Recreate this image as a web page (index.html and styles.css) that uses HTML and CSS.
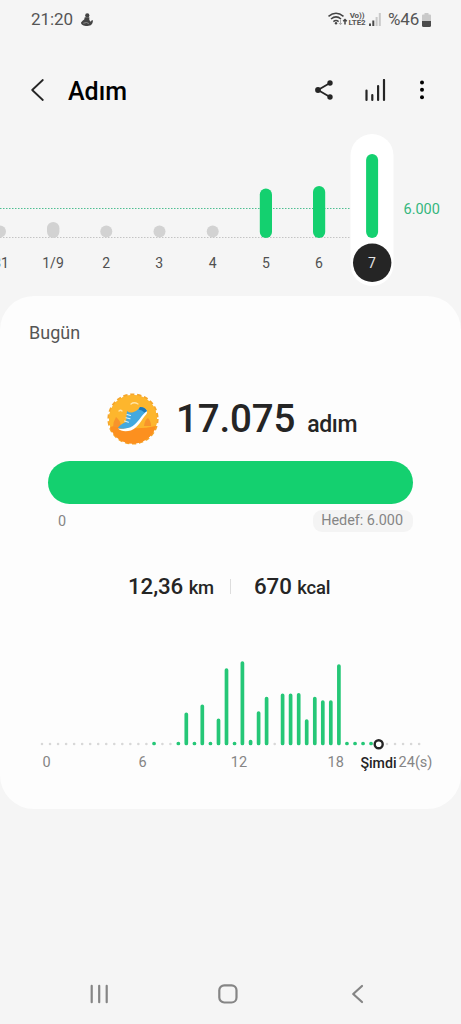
FILE: index.html
```html
<!DOCTYPE html>
<html lang="tr">
<head>
<meta charset="utf-8">
<title>Adım</title>
<link rel="stylesheet" href="styles.css">
</head>
<body>
<div class="screen">
  <div class="status">
    <span class="clock">21:20</span>
    <svg class="notif" width="12" height="13" viewBox="0 0 13 14"><circle cx="6.800" cy="2.600" r="2.300"/><path d="M4 4.500h5L9 7.500l1.500 2 1.400-2 1 .6c0 3.700-2 5.900-6 5.900C2.400 14 0 12.500 0 10.200L2 8 3.500 7z"/><path class="cut" d="M2.500 11 6 10.300l2.500 1"/></svg>
    <div class="status-right">
      <svg class="wifi" width="20" height="16" viewBox="0 0 20 16"><path d="M.5 5.300q7.500-6.200 15 0M3 8q5-4.200 10 0M5.400 10.600q2.600-2.300 5.200 0"/><circle cx="8" cy="12.300" r="1.200"/><path class="thin" d="M12.500 8.500v5M11 12l1.500 1.700L14 12"/><path class="arrow" d="M17 13.500V8.700M15.200 10.300 17 8.500l1.800 1.800"/></svg>
      <span class="volte"><span>Vo))</span><span>LTE2</span></span>
      <svg class="signal" width="12" height="13" viewBox="0 0 12 13"><path class="on" d="M0 10.500h2V13H0zM3.300 7.500h2V13h-2z"/><path class="off" d="M6.600 4h2v9h-2zM9.800 0h2v13h-2z"/></svg>
      <span class="percent">%46</span>
      <svg class="battery" width="9" height="14" viewBox="0 0 9 14"><path class="off" d="M2.500 0h4v1.500H8q1 0 1 1V8H0V2.500q0-1 1-1h1.500z"/><path class="on" d="M0 8h9v4.500q0 1.500-1.500 1.500h-6Q0 14 0 12.500z"/></svg>
    </div>
  </div>

  <header class="header">
    <svg class="back" width="14" height="24" viewBox="0 0 14 24"><path d="M12.800 2 2.200 12l10.600 10"/></svg>
    <h1>Adım</h1>
    <svg class="share" width="20" height="22" viewBox="0 0 20 22"><path d="M16 4 4 11l12 7"/><circle cx="16" cy="4" r="2.700"/><circle cx="4" cy="11" r="2.900"/><circle cx="16" cy="18" r="2.700"/></svg>
    <svg class="stats" width="21" height="23" viewBox="0 0 21 23"><path d="M1.500 11.500V21M7.300 16v5M13.100 7v14M19 1v20"/></svg>
    <svg class="more" width="6" height="20" viewBox="0 0 6 20"><circle cx="3" cy="2.400" r="2"/><circle cx="3" cy="9.800" r="2"/><circle cx="3" cy="17.200" r="2"/></svg>
  </header>

  <svg class="week" width="461" height="166" viewBox="0 130 461 166">
    <path class="goal-line" d="M0 208.500H351"/>
    <path class="base-line" d="M0 237.500H351"/>
    <rect class="selected" x="350.500" y="134" width="43" height="152" rx="21.500"/>
    <g class="idle"><circle cx="0" cy="231.500" r="6"/><rect x="47" y="222" width="12.400" height="16" rx="6.200"/><circle cx="106.300" cy="231.500" r="6"/><circle cx="159.500" cy="231.500" r="6"/><circle cx="212.700" cy="231.500" r="6"/></g>
    <g class="active"><rect x="259.800" y="188.500" width="12.200" height="49.500" rx="6.100"/><rect x="313" y="186" width="12.200" height="52" rx="6.100"/><rect x="366.100" y="154" width="12" height="84" rx="6"/></g>
    <circle class="today" cx="372.200" cy="262.800" r="19.200"/>
    <g class="days"><text x="1" y="267.500">31</text><text x="53" y="267.500">1/9</text><text x="106.200" y="267.500">2</text><text x="159.300" y="267.500">3</text><text x="212.700" y="267.500">4</text><text x="266" y="267.500">5</text><text x="319" y="267.500">6</text><text class="now" x="372" y="267.500">7</text></g>
    <text class="goal-label" x="403.500" y="213.500">6.000</text>
  </svg>

  <main class="card">
    <h2>Bugün</h2>
    <div class="total">
      <svg class="badge" width="54" height="54" viewBox="-27 -27 54 54">
        <circle class="teeth" r="24"/>
        <circle class="disc" r="24"/>
        <path class="ground" d="M-23 8q6-2 12 0 17 3 34-1A24 24 0 0 1-23 8z"/>
        <path class="flame" d="M-20 8q0-5 3-10 5 4 5 10zM11 7q1-7 4-8 3 3 3 8z"/>
        <path class="cloud" d="M-14-8q1.500-1.500 3 0M-2-15q3-2.500 7 0"/>
        <path class="sole" d="M-15 9.500q8 1 13-2.500C4 2 7-5 13-9.500q1.800 2 .5 4.500C8 1 6 8-2 11.500q-9 2-13-2z"/>
        <path class="shoe" d="M-15 9q2-3.500 8-6l1-11q3 2.500 6.500 1 4-1 6.500-5 5 0 7 4C8-4 5 5-3 8.500q-6 2-12 .5z"/>
        <path class="heel" d="M7-12q5 0 7 4l-2.500 1.500Q9-9 5.500-9.500z"/>
        <path class="lace" d="M-6-4.500l3.500 1M-7-1.200l4 1M-8.500 2l4 1.200"/>
      </svg>
      <span class="count">17.075</span><span class="unit">adım</span>
    </div>
    <div class="progress"></div>
    <div class="range"><span>0</span><span class="target">Hedef: 6.000</span></div>
    <div class="metrics">
      <span class="metric">12,36 <small>km</small></span>
      <i class="divider"></i>
      <span class="metric">670 <small>kcal</small></span>
    </div>
    <svg class="hours" width="461" height="130" viewBox="0 650 461 130">
      <path class="rest" d="M42 744h104.500M162.400 744h8.200M274.700 744h.1M387 744h33"/>
      <path class="dots" d="M154 743.500h.1M178.300 743.500h.1M194.400 743.500h.1M210.400 743.500h.1M234.500 743.500h.1M250.600 741.500v2M346.900 743.500h.1M355 743.500h.1M363 743.500h.1M371 743.500h.1"/>
      <path class="bars" d="M186.300 714.300V743.500M202.300 706.300V743.500M218.500 720.300V743.500M226.500 670V743.500M242.400 663V743.500M258.600 713V743.500M266.600 698.500V743.500M282.600 695.300V743.500M290.600 695.300V743.500M298.700 694.800V743.500M306.700 721V743.500M314.800 698.500V743.500M322.800 702V743.500M330.800 702V743.500M338.900 666V743.500"/>
      <circle class="cursor" cx="378.700" cy="744.200" r="4"/>
      <g class="ticks"><text x="46.700" y="767">0</text><text x="142.700" y="767">6</text><text x="239" y="767">12</text><text x="335.700" y="767">18</text><text x="415.500" y="766.500">24(s)</text><text class="now" x="378.500" y="767.500">Şimdi</text></g>
    </svg>
  </main>

  <nav class="nav">
    <svg width="20" height="20" viewBox="0 0 20 20"><path d="M2.700 1.800v16.400M10.200 1.800v16.400M17.700 1.800v16.400"/></svg>
    <svg class="home" width="20" height="20" viewBox="0 0 20 20"><rect x="1.300" y="1.300" width="17.200" height="17.200" rx="5"/></svg>
    <svg width="14" height="20" viewBox="0 0 14 20"><path d="M11 2 2.200 10l8.800 8"/></svg>
  </nav>
</div>
</body>
</html>
```

FILE: styles.css
```css
* { box-sizing: border-box; }
body { margin: 0; background: #f5f5f5; font-family: Roboto, "Noto Sans", sans-serif; }
.screen { width: 461px; height: 1024px; display: flex; flex-direction: column; overflow: hidden; background: #f5f5f5; color: #252525; }
svg { display: block; flex: none; }

.status { height: 38px; padding: 0 30px 0 31px; display: flex; align-items: center; color: #555; }
.clock { font-size: 17px; letter-spacing: -0.1px; }
.notif { margin-left: 8px; fill: #444; }
.notif .cut { fill: none; stroke: #aaa; stroke-width: 0.8; }
.status-right { margin-left: auto; display: flex; align-items: center; }
.wifi { fill: none; stroke: #444; stroke-width: 1.5; }
.wifi circle { fill: #444; stroke: none; }
.wifi .thin { stroke: #aaa; stroke-width: 1; }
.volte { width: 18px; display: flex; flex-direction: column; align-items: center; font-size: 8px; line-height: 7px; font-weight: 700; letter-spacing: -0.1px; }
.signal { margin: 1px 0 0 3px; }
.on { fill: #4b4b4b; }
.off { fill: #c9c9c9; }
.percent { margin-left: 7px; font-size: 17px; letter-spacing: -0.2px; }
.battery { margin: 1px 0 0 3px; }

.header { height: 92px; padding: 12px 36px 0 30px; display: flex; align-items: center; }
.header h1 { margin: 3px auto 0 24px; font-size: 25px; font-weight: 500; line-height: 30px; color: #000; }
.back, .stats { fill: none; stroke: #252525; stroke-width: 1.8; stroke-linecap: round; stroke-linejoin: round; }
.stats { margin: 0 33px 0 31px; stroke-width: 2.2; }
.share { fill: #252525; stroke: #252525; stroke-width: 1.8; }
.share path { fill: none; }
.share circle { stroke: none; }
.more { fill: #000; }

.goal-line, .base-line { fill: none; stroke-width: 1; stroke-dasharray: 1.5 1.5; }
.goal-line { stroke: #4fbf92; }
.base-line { stroke: #c4c4c4; }
.selected { fill: #fff; }
.idle { fill: #d2d2d2; }
.active { fill: #14d06f; }
.today { fill: #252525; }
.days { font-size: 14px; fill: #505050; text-anchor: middle; }
.days .now { fill: #e4e4e4; }
.goal-label { font-size: 14.5px; fill: #36b77e; }

.card { height: 513px; flex: none; border-radius: 34px; background: #fdfdfd; display: flex; flex-direction: column; }
.card h2 { margin: 26px 0 0 29px; font-size: 18px; line-height: 22px; font-weight: 400; color: #555; }
.total { height: 56px; margin: 47px 0 0 106px; display: flex; align-items: baseline; }
.badge { align-self: center; }
.count { margin-left: 16px; font-size: 38.5px; line-height: 56px; font-weight: 500; letter-spacing: -0.15px; }
.unit { margin-left: 12px; font-size: 23px; font-weight: 500; letter-spacing: -0.4px; }
.teeth { fill: #fbb32d; stroke: #f5a62c; stroke-width: 3.2; stroke-dasharray: 4.2 2.65; }
.disc { fill: #fdb62d; }
.ground { fill: #fc901f; }
.flame { fill: #f7942b; }
.cloud, .lace { fill: none; stroke: #ffe4a6; stroke-width: 1.3; stroke-linecap: round; }
.lace { stroke: #d8effa; stroke-width: 1.1; }
.sole { fill: #fff; }
.shoe { fill: #43a9df; }
.heel { fill: #1d78b8; }

.progress { height: 43px; margin: 14px 48px 0; border-radius: 22px; background: #14d06f; }
.range { height: 22px; margin: 6px 48px 0 58px; display: flex; justify-content: space-between; align-items: center; font-size: 14.4px; color: #858585; }
.range .target { padding: 0 10px 0 8px; line-height: 22px; border-radius: 9px; background: #f4f4f4; }

.metrics { height: 30px; margin: 39px 0 0 128px; display: flex; align-items: center; }
.metric { font-size: 22.3px; font-weight: 500; letter-spacing: -0.1px; white-space: pre; }
.metric small { font-size: 18.4px; }
.divider { width: 1px; height: 15px; margin: 0 23px 0 16px; background: #ddd; }

.hours { margin-top: 49px; }
.rest { fill: none; stroke: #d8d8d8; stroke-width: 2.6; stroke-linecap: round; stroke-dasharray: 0 8.03; }
.dots, .bars { fill: none; stroke: #25c777; stroke-width: 3.7; stroke-linecap: round; }
.cursor { fill: #fff; stroke: #252525; stroke-width: 2.4; }
.ticks { font-size: 14.5px; fill: #858585; text-anchor: middle; }
.ticks .now { font-size: 14.2px; font-weight: 500; fill: #252525; }

.nav { height: 61px; margin-top: auto; padding: 0 96px 0 89px; display: flex; justify-content: space-between; align-items: center; }
.nav svg { fill: none; stroke: #858585; stroke-width: 2.2; stroke-linecap: round; stroke-linejoin: round; }
.nav .home { margin-right: 4px; }
```
